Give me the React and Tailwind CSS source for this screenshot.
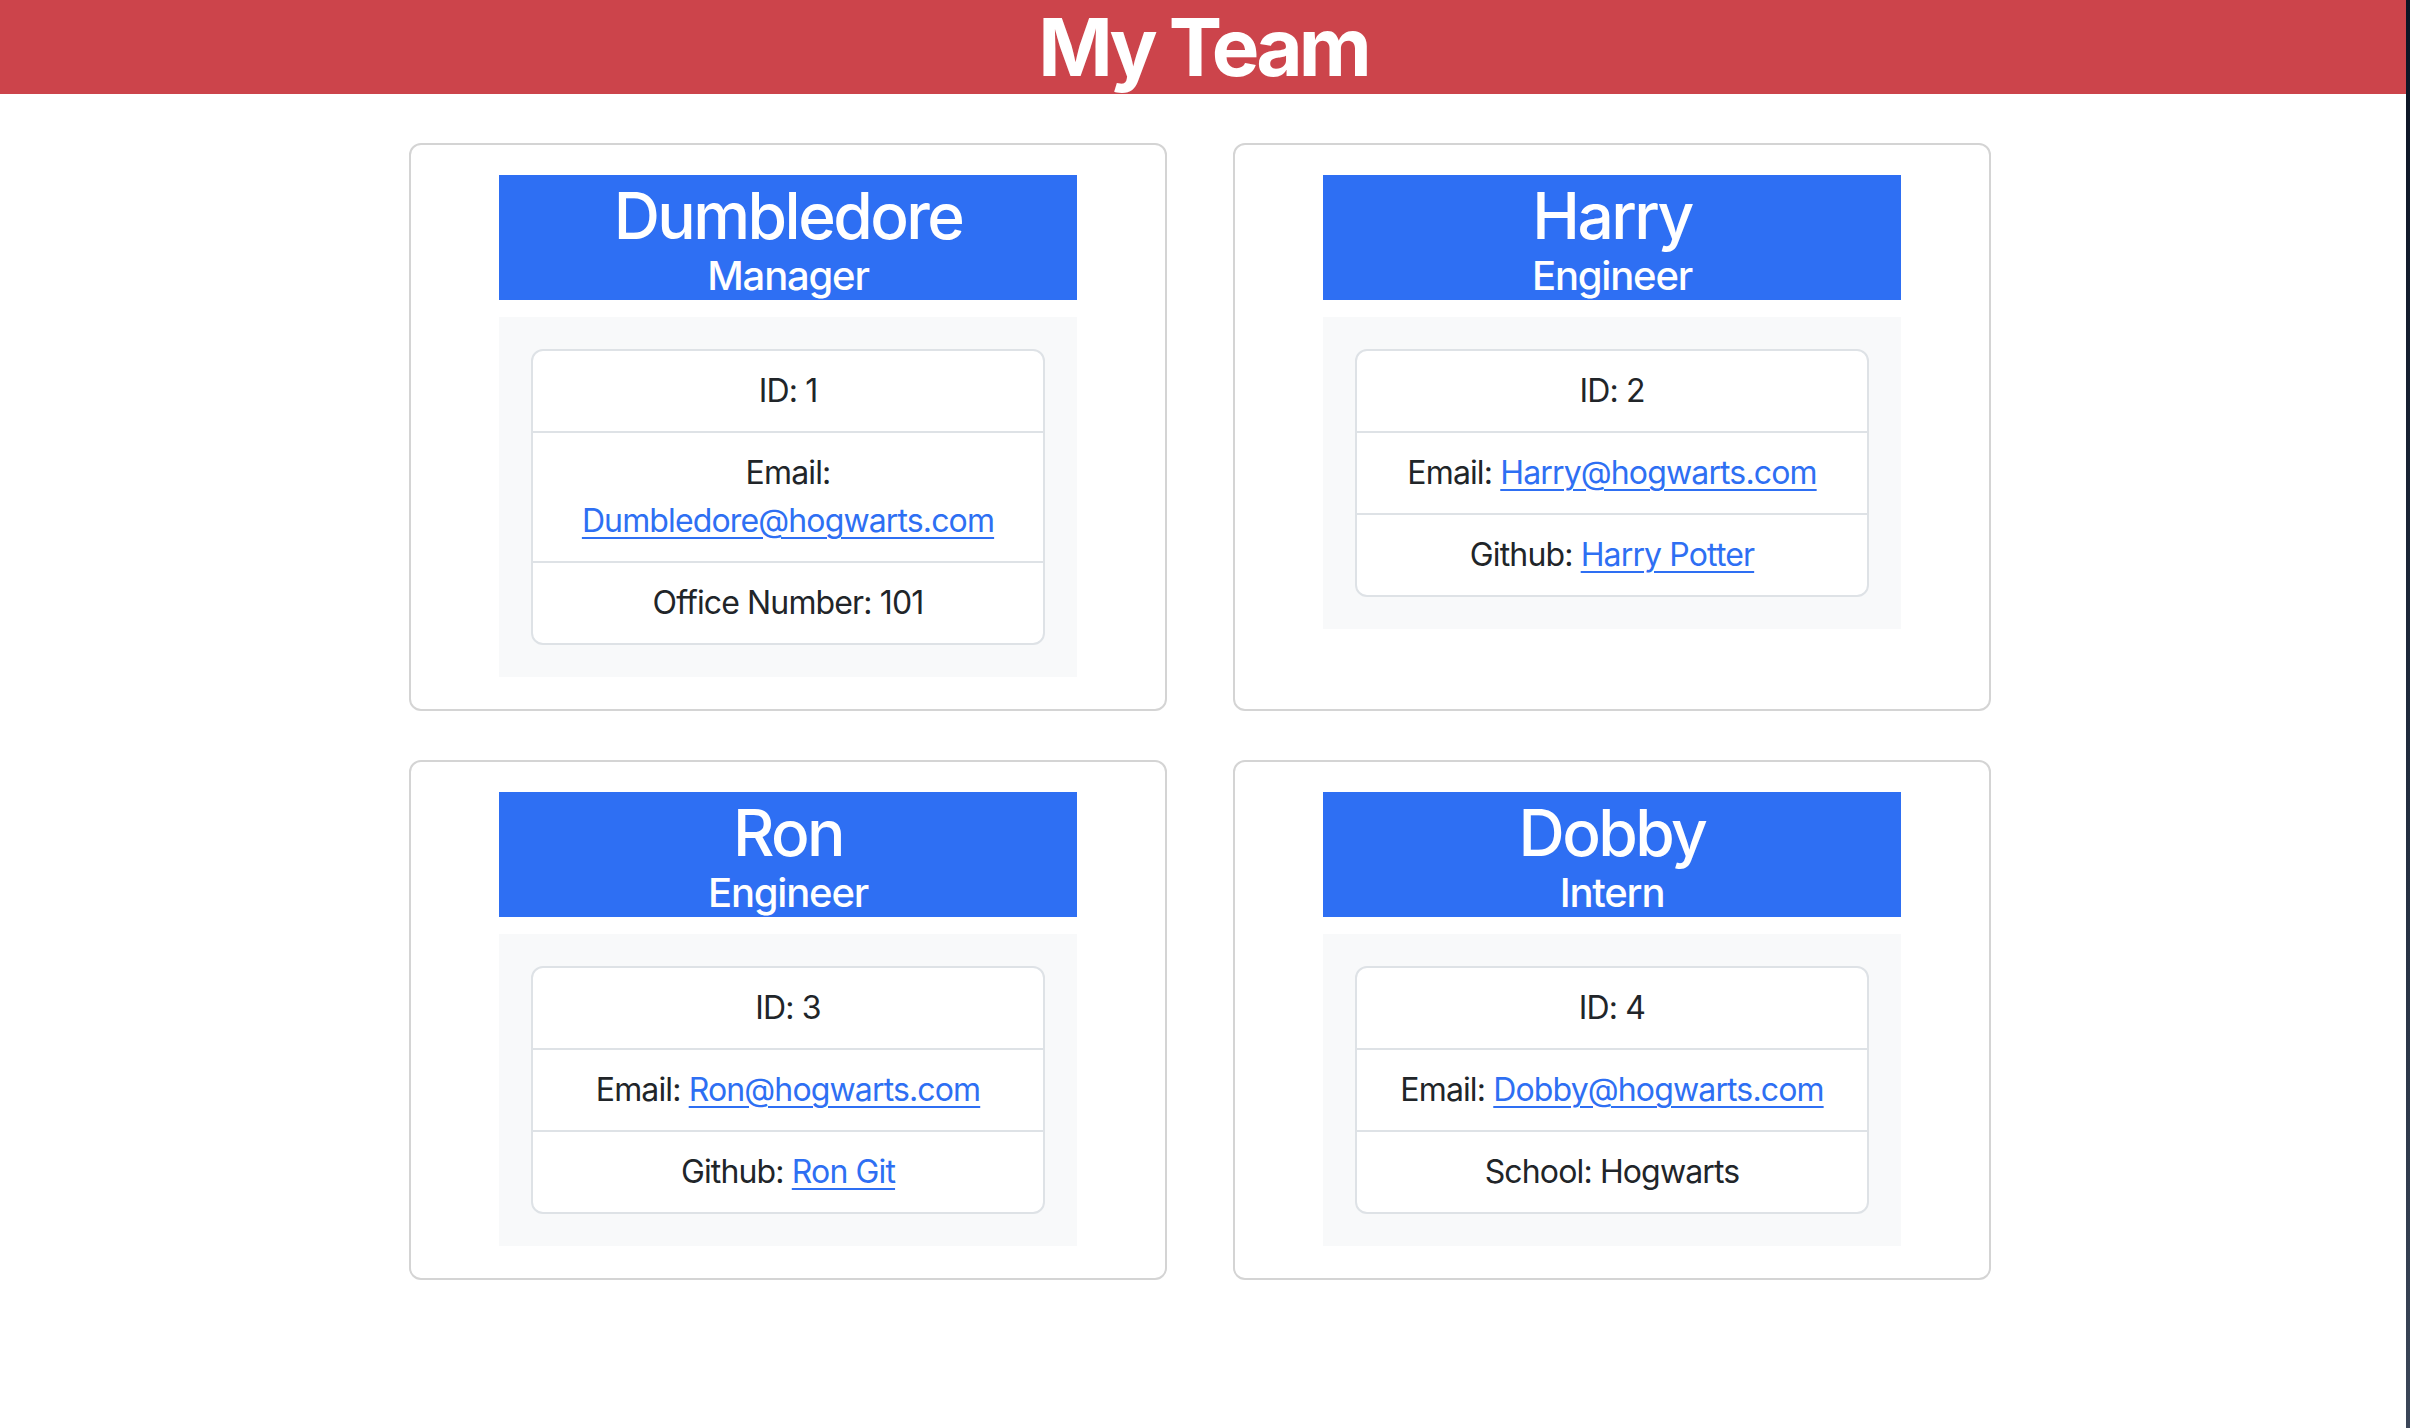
const team = [
  {
    name: 'Dumbledore',
    role: 'Manager',
    id: 1,
    email: 'Dumbledore@hogwarts.com',
    wrapEmail: true,
    extra: { label: 'Office Number', value: '101' },
  },
  {
    name: 'Harry',
    role: 'Engineer',
    id: 2,
    email: 'Harry@hogwarts.com',
    extra: { label: 'Github', value: 'Harry Potter', link: true },
  },
  {
    name: 'Ron',
    role: 'Engineer',
    id: 3,
    email: 'Ron@hogwarts.com',
    extra: { label: 'Github', value: 'Ron Git', link: true },
  },
  {
    name: 'Dobby',
    role: 'Intern',
    id: 4,
    email: 'Dobby@hogwarts.com',
    extra: { label: 'School', value: 'Hogwarts' },
  },
]

const linkClass = 'text-[#2e6ff3] underline decoration-[2px] underline-offset-[5px]'

function MemberCard({ member }) {
  const { name, role, id, email, wrapEmail, extra } = member
  return (
    <div className="flex flex-col border-2 border-[#d4d4d4] rounded-[12px] bg-white px-[88px] pt-[30px] pb-[32px]">
      {/* Name banner */}
      <div className="bg-[#2e6ff3] text-white text-center">
        <h2 className="text-[64px] leading-[77px] font-medium tracking-[-0.04em] pt-[2px] -mb-[2px]">{name}</h2>
        <h5 className="text-[40px] leading-[48px] font-medium tracking-[-0.03em]">{role}</h5>
      </div>

      {/* Details */}
      <div className="mt-[17px] bg-[#f8f9fa] p-8">
        <ul className="bg-white border-2 border-[#dee2e6] rounded-[12px] divide-y-2 divide-[#dee2e6] text-[#212529] text-[32px] leading-[48px] tracking-[-0.027em] text-center">
          <li className="py-4 px-4">ID: {id}</li>
          <li className="py-4 px-4">
            Email:{wrapEmail ? <br /> : ' '}
            <a href={`mailto:${email}`} className={linkClass}>{email}</a>
          </li>
          <li className="py-4 px-4">
            {extra.label}:{' '}
            {extra.link ? <a href="#" className={linkClass}>{extra.value}</a> : extra.value}
          </li>
        </ul>
      </div>
    </div>
  )
}

export default function App() {
  return (
    <div className="flex min-h-[1428px] font-['Inter',sans-serif]">
      <div className="w-[2406px] bg-white">
        <header className="h-[94px] bg-[#cc444b] flex items-center justify-center">
          <h1 className="text-white text-[80px] leading-none font-bold tracking-[-0.05em]">My Team</h1>
        </header>

        <div className="grid grid-cols-[758px_758px] gap-x-[66px] gap-y-[49px] pl-[409px] pt-[49px] pb-12">
          {team.map(m => <MemberCard key={m.id} member={m} />)}
        </div>
      </div>
      <div className="flex-1 bg-gradient-to-b from-[#0c1424] via-[#1f2a3c] to-[#3b4658]" />
    </div>
  )
}
